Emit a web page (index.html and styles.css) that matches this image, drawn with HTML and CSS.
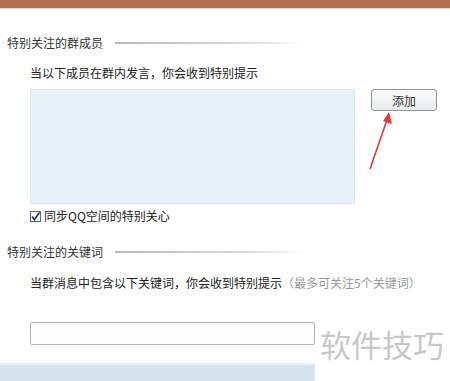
FILE: index.html
```html
<!DOCTYPE html>
<html lang="zh-CN">
<head>
    <meta charset="UTF-8">
    <title>特别关注</title>
    <link rel="stylesheet" href="styles.css">
</head>
<body>
    <div class="topbar"></div>

    <!-- 特别关注的群成员 -->
    <div class="section-title title-first">
        <span>特别关注的群成员</span>
        <div class="title-line"></div>
    </div>
    <p class="desc">当以下成员在群内发言，你会收到特别提示</p>
    <div class="member-row">
        <div class="member-box"></div>
        <button class="add-btn">添加</button>
    </div>
    <label class="sync-row">
        <span class="check-box">
            <svg width="11" height="11" viewBox="0 0 11 11">
                <path d="M2 5.5 L4.5 8.5 L9.5 1.5" fill="none" stroke="#1e3f66" stroke-width="1.8"/>
            </svg>
        </span>
        同步QQ空间的特别关心
    </label>

    <!-- 特别关注的关键词 -->
    <div class="section-title title-second">
        <span>特别关注的关键词</span>
        <div class="title-line"></div>
    </div>
    <p class="desc desc-second">当群消息中包含以下关键词，你会收到特别提示<span class="hint">（最多可关注5个关键词）</span></p>
    <div class="keyword-input"></div>

    <div class="bottombar"></div>

    <!-- arrow and watermark over content -->
    <svg class="arrow" width="40" height="70" viewBox="0 0 40 70">
        <line x1="6" y1="62" x2="24" y2="10" stroke="#e23a3a" stroke-width="1.6"/>
        <polygon points="25,5 28,17 19,14" fill="#e23a3a"/>
    </svg>
    <div class="watermark">软件技巧</div>
</body>
</html>
```

FILE: styles.css
```css
* {
    margin: 0;
    padding: 0;
    box-sizing: border-box;
}

body {
    width: 450px;
    height: 381px;
    overflow: hidden;
    position: relative;
    background-color: #ffffff;
    font-family: "Noto Sans CJK SC", "Noto Sans", sans-serif;
    font-size: 12px;
    color: #333333;
}

.topbar {
    height: 9px;
    background-color: #b4704c;
    border-bottom: 1px solid #ead6c8;
}

.section-title {
    display: flex;
    align-items: center;
    padding-left: 7px;
    height: 16px;
    line-height: 16px;
    color: #333333;
}

.title-first {
    margin-top: 26px;
}

.title-second {
    margin-top: 20px;
}

.title-line {
    margin-left: 12px;
    width: 192px;
    height: 2px;
    background: linear-gradient(to right, #b3b9bf, #d8dde1 70%, rgba(255, 255, 255, 0));
}

.desc {
    margin-top: 14px;
    padding-left: 30px;
    height: 16px;
    line-height: 16px;
    color: #222222;
}

.desc-second {
    margin-top: 15px;
}

.hint {
    color: #999999;
}

.member-row {
    display: flex;
    align-items: flex-start;
    margin-top: 8px;
    padding-left: 30px;
}

.member-box {
    width: 325px;
    height: 115px;
    background-color: #e8f2f9;
    border: 1px solid #dde9f2;
}

.add-btn {
    margin-left: 16px;
    width: 66px;
    height: 22px;
    font-family: "Noto Sans CJK SC", sans-serif;
    font-size: 12px;
    color: #333333;
    background: linear-gradient(#fbfbfb, #e9ecee);
    border: 1px solid #8f969c;
    border-radius: 3px;
}

.sync-row {
    display: flex;
    align-items: center;
    margin-top: 4px;
    padding-left: 30px;
    height: 16px;
    line-height: 16px;
    color: #222222;
}

.check-box {
    display: flex;
    width: 11px;
    height: 11px;
    margin-right: 3px;
    border: 1px solid #5a6d80;
    background-color: #ffffff;
}

.check-box svg {
    margin: -1px;
}

.keyword-input {
    margin-top: 31px;
    margin-left: 30px;
    width: 285px;
    height: 23px;
    border: 1px solid #b0b4b8;
    border-radius: 2px;
    background-color: #fdfdfd;
}

.bottombar {
    margin-top: 18px;
    height: 18px;
    background-color: #d6e4f0;
    border-top: 2px solid #eaf2f8;
}

.arrow {
    position: absolute;
    left: 364px;
    top: 107px;
}

.watermark {
    position: absolute;
    left: 315px;
    top: 318px;
    width: 135px;
    height: 63px;
    padding-left: 5px;
    padding-top: 6px;
    background-color: #ffffff;
    font-size: 31px;
    line-height: 40px;
    color: #c8c8c8;
    letter-spacing: 0px;
}
```
